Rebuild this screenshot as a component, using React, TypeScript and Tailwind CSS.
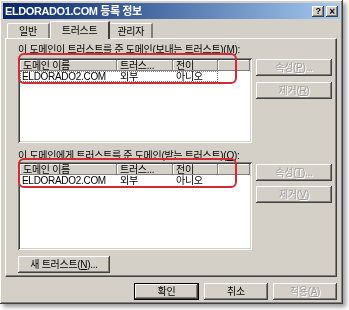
import React from "react"

const raised =
  "shadow-[inset_-1px_-1px_#404040,inset_1px_1px_#ffffff,inset_-2px_-2px_#808080,inset_2px_2px_#d4d0c8]"
const sunken =
  "shadow-[inset_1px_1px_#808080,inset_-1px_-1px_#ffffff,inset_2px_2px_#404040,inset_-2px_-2px_#d4d0c8]"
const headerCell =
  "h-[11px] flex items-center pl-[3px] bg-[#d4d0c8] shadow-[inset_-1px_-1px_#808080,inset_1px_1px_#ffffff] overflow-hidden whitespace-nowrap"

function Btn({ label, disabled, def, className }: { label: React.ReactNode; disabled?: boolean; def?: boolean; className?: string }) {
  return (
    <div
      className={`h-[17px] flex items-center justify-center bg-[#d4d0c8] ${def ? "border border-black" : ""} ${raised} ${
        disabled ? "text-[#a0a0a0] [text-shadow:1px_1px_#ffffff]" : "text-black"
      } ${className || ""}`}
    >
      {label}
    </div>
  )
}

type Row = { name: string; type: string; trans: string }

function TrustList({ rows, focused }: { rows: Row[]; focused?: boolean }) {
  return (
    <div className={`w-[234px] bg-white p-[2px] ${sunken} flex flex-col`}>
      <div className="flex">
        <div className={`${headerCell} w-[97px]`}>도메인 이름</div>
        <div className={`${headerCell} w-[56px]`}>트러스...</div>
        <div className={`${headerCell} w-[45px]`}>전이</div>
        <div className={`${headerCell} flex-1`}></div>
      </div>
      {rows.map((r, i) => (
        <div
          key={i}
          className={`flex w-[198px] h-[11px] items-center ${focused ? "outline outline-1 outline-dotted outline-[#808080] -outline-offset-1" : ""}`}
        >
          <div className="w-[97px] pl-[2px] whitespace-nowrap">{r.name}</div>
          <div className="w-[56px] pl-[3px] whitespace-nowrap">{r.type}</div>
          <div className="w-[45px] pl-[3px] whitespace-nowrap">{r.trans}</div>
        </div>
      ))}
    </div>
  )
}

export default function App() {
  const rows: Row[] = [{ name: "ELDORADO2.COM", type: "외부", trans: "아니오" }]

  return (
    <div
      className="w-[349px] h-[310px] bg-white text-[10px] tracking-[-0.3px] leading-[11px] text-black"
      style={{ fontFamily: '"Liberation Sans", "Noto Sans CJK KR", sans-serif' }}
    >
      <div className={`w-[343px] h-[304px] bg-[#d4d0c8] p-[3px] flex flex-col ${raised} drop-shadow-[3px_3px_2px_rgba(0,0,0,0.4)]`}>
        {/* title bar */}
        <div className="h-[16px] flex items-center justify-between pl-[2px] pr-[2px] bg-gradient-to-r from-[#0a246a] to-[#a6caf0]">
          <span className="text-white font-bold text-[11px] tracking-[-0.4px]">ELDORADO1.COM 등록 정보</span>
          <div className="flex gap-[2px]">
            <div className={`w-[12px] h-[11px] bg-[#d4d0c8] ${raised} flex items-center justify-center text-[9px] font-bold`}>?</div>
            <div className={`w-[12px] h-[11px] bg-[#d4d0c8] ${raised} flex items-center justify-center text-[10px] font-bold`}>×</div>
          </div>
        </div>

        {/* tabs */}
        <div className="flex items-end h-[18px] pl-[4px] mt-[1px]">
          <div className="h-[15px] px-[11px] flex items-center border-t border-l border-white border-r-2 border-r-[#808080] rounded-tl-[2px]">일반</div>
          <div className="h-[18px] px-[11px] -mb-[1px] flex items-center bg-[#d4d0c8] border-t border-l border-white border-r-2 border-r-[#404040] relative z-10">
            트러스트
          </div>
          <div className="h-[15px] px-[7px] flex items-center border-t border-white border-r-2 border-r-[#808080]">관리자</div>
        </div>

        {/* tab panel */}
        <div className="mx-[2px] w-[332px] h-[239px] border-t border-l border-white border-r border-b border-r-[#404040] border-b-[#404040] shadow-[inset_-1px_-1px_#808080] pl-[12px] pt-[5px] flex flex-col relative">
          <div className="whitespace-nowrap">이 도메인이 트러스트를 준 도메인(보내는 트러스트)(<span className="underline">M</span>):</div>
          <div className="flex gap-[4px] mt-[3px]">
            <div className="h-[85px] flex">
              <TrustList rows={rows} focused />
            </div>
            <div className="flex flex-col gap-[6px] pt-[1px]">
              <Btn disabled className="w-[76px]" label={<span>속성(<span className="underline">P</span>)...</span>} />
              <Btn disabled className="w-[76px]" label={<span>제거(<span className="underline">R</span>)</span>} />
            </div>
          </div>

          <div className="whitespace-nowrap mt-[7px]">이 도메인에게 트러스트를 준 도메인(받는 트러스트)(<span className="underline">O</span>):</div>
          <div className="flex gap-[4px] mt-[1px]">
            <div className="h-[88px] flex">
              <TrustList rows={rows} />
            </div>
            <div className="flex flex-col gap-[5px] pt-[2px]">
              <Btn disabled className="w-[76px]" label={<span>속성(<span className="underline">T</span>)...</span>} />
              <Btn disabled className="w-[76px]" label={<span>제거(<span className="underline">V</span>)</span>} />
            </div>
          </div>

          <Btn className="w-[92px] mt-[6px]" label={<span>새 트러스트(<span className="underline">N</span>)...</span>} />

          {/* red annotation outlines */}
          <div className="absolute left-[12px] top-[14px] w-[219px] h-[31px] border-2 border-[#d42a33] rounded-[6px]"></div>
          <div className="absolute left-[12px] top-[119px] w-[219px] h-[30px] border-2 border-[#d42a33] rounded-[6px]"></div>
        </div>

        {/* bottom buttons */}
        <div className="flex justify-end gap-[5px] mt-[6px] pr-[3px]">
          <Btn def className="w-[65px]" label="확인" />
          <Btn className="w-[64px]" label="취소" />
          <Btn disabled className="w-[64px]" label={<span>적용(<span className="underline">A</span>)</span>} />
        </div>
      </div>
    </div>
  )
}
